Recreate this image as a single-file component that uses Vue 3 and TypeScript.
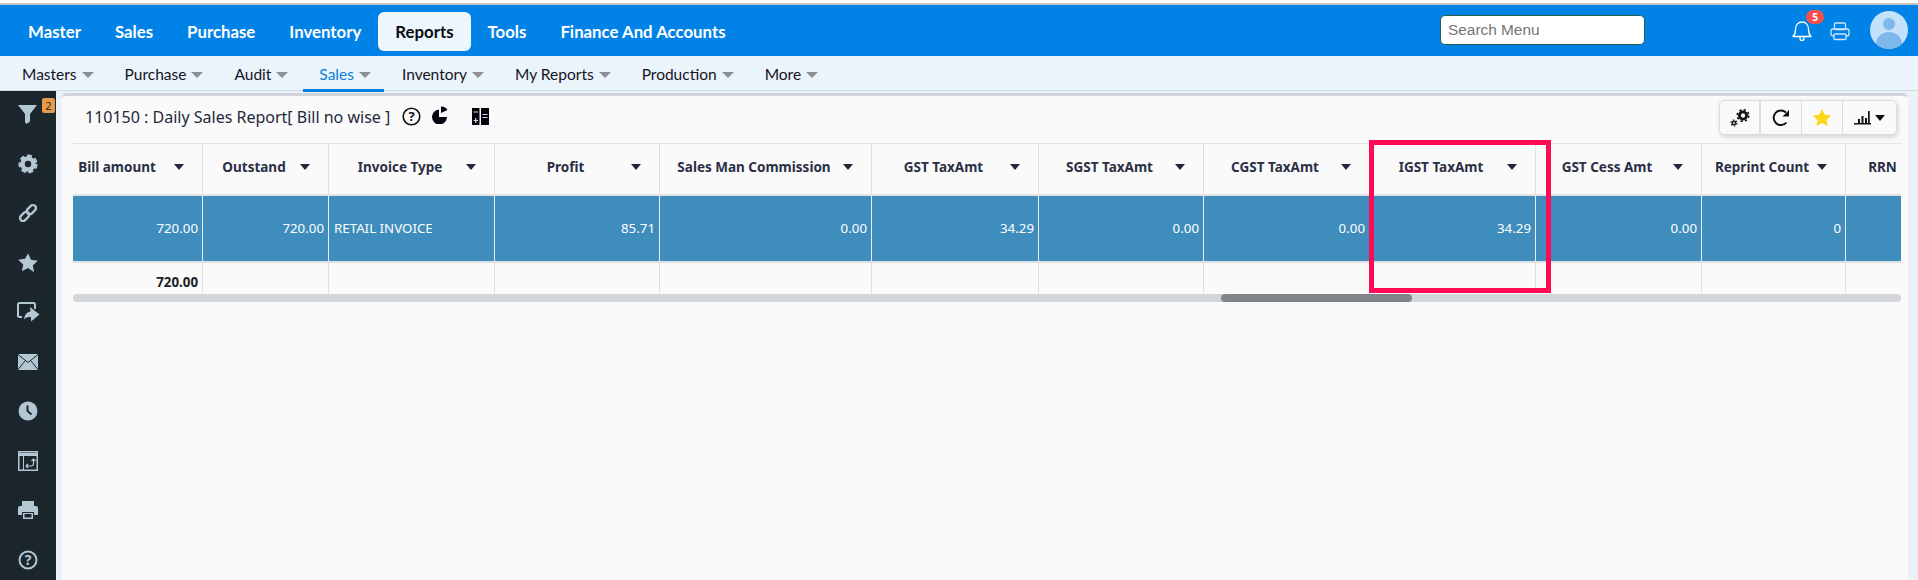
<script setup lang="ts">
interface HeaderCell { label: string }
const topMenu: string[] = ['Master', 'Sales', 'Purchase', 'Inventory', 'Reports', 'Tools', 'Finance And Accounts']
const subMenu: string[] = ['Masters', 'Purchase', 'Audit', 'Sales', 'Inventory', 'My Reports', 'Production', 'More']
const headers: HeaderCell[] = [
  'Bill amount', 'Outstand', 'Invoice Type', 'Profit', 'Sales Man Commission', 'GST TaxAmt',
  'SGST TaxAmt', 'CGST TaxAmt', 'IGST TaxAmt', 'GST Cess Amt', 'Reprint Count', 'RRN'
].map((label) => ({ label }))
const values: string[] = ['720.00', '720.00', 'RETAIL INVOICE', '85.71', '0.00', '34.29', '0.00', '0.00', '34.29', '0.00', '0', '']
const totals: string[] = ['720.00', '', '', '', '', '', '', '', '', '', '', '']
</script>

<template>
  <div class="page">
    <div class="topline"></div>
    <header class="topbar">
      <nav class="topmenu">
        <a v-for="m in topMenu" :key="m" class="topitem" :class="{ on: m === 'Reports' }">{{ m }}</a>
      </nav>
      <input class="search" placeholder="Search Menu" />
      <div class="bell">
        <svg width="20" height="21" viewBox="0 0 20 21" fill="none" stroke="#fff" stroke-width="1.3">
          <path d="M1 16.5c2-1.800 2.500-3.500 2.500-7C3.500 5 6 2 10 2s6.500 3 6.500 7.500c0 3.500.5 5.200 2.500 7z" stroke-linejoin="round" />
          <path d="M8 17v1.500a2 2 0 0 0 4 0V17" />
        </svg>
        <span class="badge">5</span>
      </div>
      <svg class="print" width="20" height="19" viewBox="0 0 20 19" fill="none" stroke="#cfe5fb" stroke-width="1.3">
        <rect x="4.500" y="1" width="11" height="6.500" rx="1" />
        <rect x="1" y="7" width="18" height="7" rx="2" />
        <rect x="4" y="12" width="12" height="5.500" rx="1" fill="#0082e6" />
      </svg>
      <svg class="avatar" width="38" height="38" viewBox="0 0 38 38">
        <defs><clipPath id="ava"><circle cx="19" cy="19" r="19" /></clipPath></defs>
        <circle cx="19" cy="19" r="19" fill="#c4e1fb" />
        <g clip-path="url(#ava)" fill="#7db7ec">
          <circle cx="19" cy="13" r="6" />
          <ellipse cx="19" cy="33" rx="13" ry="12" />
        </g>
      </svg>
    </header>

    <nav class="submenu">
      <a v-for="s in subMenu" :key="s" class="subitem" :class="{ on: s === 'Sales' }">
        {{ s }}<i class="subcaret"></i>
      </a>
    </nav>

    <div class="main">
      <aside class="side">
        <div class="sideitem">
          <svg width="20" height="20" viewBox="0 0 20 20"><path fill="#b4c8d4" d="M0 1h19l-7 9v7.500L8.500 20 7 18V10z" /></svg>
          <span class="sidebadge">2</span>
        </div>
        <div class="sideitem">
          <svg width="20" height="20" viewBox="0 0 20 20" fill="none">
            <circle cx="10" cy="10" r="5.500" stroke="#b4c8d4" stroke-width="4.500" />
            <circle cx="10" cy="10" r="8.300" stroke="#b4c8d4" stroke-width="2.500" stroke-dasharray="4.700 2.900" />
          </svg>
        </div>
        <div class="sideitem">
          <svg width="20" height="20" viewBox="0 0 20 20" fill="none" stroke="#b4c8d4" stroke-width="2.300">
            <rect x="-5.500" y="-3" width="10.500" height="6" rx="3" transform="translate(6.800 13.200) rotate(-45)" />
            <rect x="-5" y="-3" width="10.500" height="6" rx="3" transform="translate(13.200 6.800) rotate(-45)" />
          </svg>
        </div>
        <div class="sideitem">
          <svg width="20" height="20" viewBox="0 0 20 20"><path fill="#b4c8d4" d="M10 .5l3 6.300 6.800.9-5 4.700 1.300 6.800L10 15l-6.100 3.200 1.300-6.800-5-4.700 6.800-.9z" /></svg>
        </div>
        <div class="sideitem">
          <svg width="23" height="20" viewBox="0 0 23 20" fill="none">
            <path d="M5 15H2.500A1.500 1.500 0 0 1 1 13.500v-11A1.500 1.500 0 0 1 2.500 1h14A1.500 1.500 0 0 1 18 2.500V7" stroke="#b4c8d4" stroke-width="2" />
            <path fill="#b4c8d4" d="M13 5l9.500 7.500L14 19.500V15c-3.500 0-5.500.5-7 2.500C7.500 13 10 10 13.500 9.500z" />
          </svg>
        </div>
        <div class="sideitem">
          <svg width="20" height="16" viewBox="0 0 20 16" fill="none">
            <rect width="20" height="16" rx="1" fill="#b4c8d4" />
            <path d="M0 .5l10 8 10-8M0 15.500l7-8.500M20 15.500l-7-8.500" stroke="#1c262d" stroke-width="1" />
          </svg>
        </div>
        <div class="sideitem">
          <svg width="20" height="20" viewBox="0 0 20 20" fill="none">
            <circle cx="10" cy="10" r="9.500" fill="#b4c8d4" />
            <path d="M9.500 4.500v5.500l4 3.500" stroke="#1c262d" stroke-width="2" />
          </svg>
        </div>
        <div class="sideitem">
          <svg width="20" height="20" viewBox="0 0 20 20" fill="none">
            <rect x=".75" y=".75" width="18.500" height="18.500" stroke="#b4c8d4" stroke-width="1.500" />
            <path d="M1 2h18v3H1z" fill="#b4c8d4" />
            <path d="M5.500 5v14" stroke="#b4c8d4" stroke-width="1" />
            <path d="M8 15h6l1.500-1.500V9M13.500 10l2-2 2 2M10 17l-2-2 2-2" stroke="#b4c8d4" stroke-width="1.200" />
          </svg>
        </div>
        <div class="sideitem">
          <svg width="20" height="18" viewBox="0 0 20 18">
            <path fill="#b4c8d4" d="M4 0h12v5H4zM2 5h16a2 2 0 0 1 2 2v7h-4v-3H4v3H0V7a2 2 0 0 1 2-2zM5 12h10v6H5z" />
            <path fill="#1c262d" d="M6.500 13h7v3.500h-7z" />
          </svg>
        </div>
        <div class="sideitem">
          <svg width="20" height="20" viewBox="0 0 20 20">
            <circle cx="10" cy="10" r="8.500" fill="none" stroke="#b4c8d4" stroke-width="2" />
            <text x="10" y="15" text-anchor="middle" class="qmark" fill="#b4c8d4">?</text>
          </svg>
        </div>
      </aside>

      <section class="panel">
        <div class="panelhead">
          <div class="title">
            <span class="titletext">110150 : Daily Sales Report[ Bill no wise ]</span>
            <svg class="thelp" width="19" height="19" viewBox="0 0 19 19">
              <circle cx="9.500" cy="9.500" r="8.300" fill="none" stroke="#111" stroke-width="1.600" />
              <text x="9.500" y="14" text-anchor="middle" class="qmark dark" fill="#111">?</text>
            </svg>
            <svg class="tpie" width="16" height="18" viewBox="0 0 16 18">
              <path fill="#050510" d="M7 3.500A7.500 7.500 0 1 0 15 11H7z" />
              <path fill="#050510" d="M9 .5A7 7 0 0 1 15.500 4L9 7z" />
            </svg>
            <svg class="tcalc" width="17" height="17" viewBox="0 0 17 17">
              <rect width="7.500" height="17" fill="#050510" />
              <rect x="9" width="8" height="17" fill="#050510" />
              <path d="M1.500 4h4.500M1.500 12.500h4.500M3.700 10v5M10.500 6.500h5M10.500 9.500h5" stroke="#d7dbe0" stroke-width="1.200" />
            </svg>
          </div>
          <div class="tools">
            <div class="tool wide">
              <svg width="20" height="18" viewBox="0 0 20 18" fill="none" stroke="#111">
                <circle cx="13" cy="6.500" r="3.600" stroke-width="2.800" />
                <circle cx="13" cy="6.500" r="5.800" stroke-width="1.500" stroke-dasharray="2.300 2.250" />
                <circle cx="4" cy="14" r="1.700" stroke-width="1.400" />
                <circle cx="4" cy="14" r="3" stroke-width="1.200" stroke-dasharray="1.500 1.640" />
              </svg>
            </div>
            <div class="tool">
              <svg width="18" height="18" viewBox="0 0 18 18" fill="none">
                <path d="M14.500 13.500A7.300 7.300 0 1 1 14 3.500" stroke="#111" stroke-width="1.900" />
                <path d="M17 1v6.500h-6.500z" fill="#111" />
              </svg>
            </div>
            <div class="tool">
              <svg width="18" height="17" viewBox="0 0 18 17"><path fill="#ffd414" d="M9 0l2.700 5.800 6.300.8-4.600 4.300 1.200 6.100L9 14l-5.600 3 1.200-6.100L0 6.600l6.300-.8z" /></svg>
            </div>
            <div class="tool last">
              <svg width="17" height="15" viewBox="0 0 17 15" fill="#111">
                <path d="M0 13h17v1.600H0zM4 9h2v4H4zM7.500 6h2v7h-2zM11 8h2v5h-2zM14 1h1.700v12H14z" />
              </svg>
              <i class="toolcaret"></i>
            </div>
          </div>
        </div>

        <div class="tablewrap">
          <div class="clip">
            <div class="grid head">
              <div v-for="h in headers" :key="h.label" class="hcell">
                <span class="hlabel">{{ h.label }}</span><i class="hcaret"></i>
              </div>
            </div>
            <div class="grid datarow">
              <div v-for="(v, i) in values" :key="i" class="dcell" :class="{ left: v === 'RETAIL INVOICE' }">{{ v }}</div>
            </div>
            <div class="grid foot">
              <div v-for="(v, i) in totals" :key="i" class="fcell">{{ v }}</div>
            </div>
            <div class="scrollbar"><div class="thumb"></div></div>
          </div>
          <div class="mark"></div>
        </div>
      </section>
    </div>
  </div>
</template>

<style>
html, body { margin: 0; padding: 0; background: #fff; }
</style>

<style scoped>
.page { width: 1918px; height: 580px; overflow: hidden; display: flex; flex-direction: column; background: #ecf1f7; }
.topline { height: 3px; background: #fff; border-bottom: 2px solid #c4c4c4; flex: none; }
.topbar { height: 51px; flex: none; background: #0082e6; display: flex; align-items: center; position: relative; }
.topmenu { display: flex; align-items: center; padding-left: 11px; flex: 1; }
.topitem { font: 700 16.800px Lato, sans-serif; color: #fff; padding: 0 17px; height: 39px; line-height: 40px; border-radius: 6px; margin-top: 1px; white-space: nowrap; }
.topitem.on { background: #edf5fd; color: #0b0b14; }
.search { width: 205px; height: 30px; box-sizing: border-box; border: 1px solid #2a5a4c; border-radius: 5px; padding: 0 7px; font: 15.400px "Liberation Sans", sans-serif; margin: -1px 147px 0 0; background: #fff; outline: none; }
.search::placeholder { color: #757575; opacity: 1; }
.bell { position: relative; width: 20px; height: 21px; margin-right: 18px; margin-top: -1px; }
.bell svg { display: block; }
.badge { position: absolute; left: 14px; top: -10px; width: 18px; height: 14px; border-radius: 7px; background: #f5524f; color: #fff; font: 700 10px/14px "Noto Sans", sans-serif; text-align: center; }
.print { margin-right: 20px; margin-top: 2px; }
.avatar { margin-right: 10px; margin-top: -1px; }

.submenu { height: 34px; flex: none; box-sizing: content-box; background: #ebf3fb; border-bottom: 1px solid #cddbe8; display: flex; gap: 2px; padding-left: 6px; }
.subitem { height: 36px; box-sizing: border-box; padding: 0 13px 0 16px; font: 15.500px/36px Lato, sans-serif; color: #14141e; display: flex; align-items: flex-start; white-space: nowrap; }
.subitem.on { color: #0a7fdf; border-bottom: 3px solid #0a7fdf; }
.subcaret { width: 0; height: 0; border-left: 6px solid transparent; border-right: 6px solid transparent; border-top: 6px solid #8b9096; margin: 16px 0 0 5px; }

.main { flex: 1; display: flex; min-height: 0; }
.side { width: 56px; flex: none; background: #1c262d; display: flex; flex-direction: column; }
.sideitem { height: 49.500px; flex: none; display: flex; align-items: center; justify-content: center; position: relative; padding-bottom: 3px; box-sizing: border-box; }
.sideitem svg { display: block; }
.sidebadge { position: absolute; left: 42px; top: 7px; width: 13px; height: 15px; border-radius: 2px; background: #e69a4a; color: #2a2a2a; font: 11px/15px "Noto Sans", sans-serif; text-align: center; }
.qmark { font: 700 14px "Noto Sans", sans-serif; }
.qmark.dark { font-size: 13px; }

.panel { flex: 1; margin: 2px 10px 0 6px; background: #fafafa; border-top: 3px solid #d0d4da; border-radius: 5px 5px 0 0; min-width: 0; }
.panelhead { height: 47px; box-sizing: border-box; display: flex; justify-content: space-between; padding: 4px 11px 0 23px; }
.title { display: flex; align-items: center; height: 33px; }
.titletext { font: 16px "Noto Sans", sans-serif; color: #24283a; white-space: nowrap; }
.thelp { margin-left: 12px; }
.tpie { margin-left: 11px; margin-top: -3px; }
.tcalc { margin-left: 24px; margin-top: -1px; }
.tools { display: flex; width: 178px; height: 35px; box-sizing: border-box; border: 1px solid #dcdcdc; border-radius: 5px; background: #fafafa; box-shadow: 1px 2px 5px rgba(0, 0, 0, .16); }
.tool { width: 41px; flex: none; box-sizing: border-box; border-right: 1px solid #dcdcdc; display: flex; align-items: center; justify-content: center; }
.tool.wide { border-right-width: 2px; }
.tool.last { flex: 1; border-right: 0; gap: 4px; }
.toolcaret { width: 0; height: 0; border-left: 5px solid transparent; border-right: 5px solid transparent; border-top: 6px solid #111; }

.tablewrap { position: relative; margin: 0 7px 0 11px; }
.clip { overflow: hidden; border-top: 1px solid #e3e3e3; }
.grid { display: grid; grid-template-columns: 148px 126px 166px 165px 212px 167px 165px 166px 166px 166px 144px 96px; width: 1887px; margin-left: -18px; }
.head { height: 50px; border-bottom: 2px solid #e0e2e5; }
.hcell { display: flex; align-items: center; box-sizing: border-box; padding: 0 18px 4px 5px; border-right: 1px solid #e0e0e0; }
.hcell:last-child { border-right: 0; }
.hlabel { flex: 1; text-align: center; font: 700 13.500px "Noto Sans", sans-serif; color: #2a2f45; white-space: nowrap; }
.hcaret { flex: none; width: 0; height: 0; border-left: 5.500px solid transparent; border-right: 5.500px solid transparent; border-top: 6px solid #23283a; }
.datarow { height: 65px; background: #3e8dbd; border-bottom: 2px solid #e0e2e5; }
.dcell { box-sizing: border-box; padding: 0 4px 0 5px; border-right: 1px solid #e6eff5; text-align: right; color: #fff; font: 13.300px/65px "Noto Sans", sans-serif; white-space: nowrap; }
.dcell.left { text-align: left; }
.dcell:last-child { border-right: 0; }
.foot { height: 31px; }
.fcell { height: 31px; box-sizing: border-box; padding: 0 4px 0 5px; border-right: 1px solid #e0e0e0; text-align: right; color: #1b1e28; font: 700 13.300px/38px "Noto Sans", sans-serif; }
.fcell:last-child { border-right: 0; }
.scrollbar { height: 8px; background: #d2d5da; border-radius: 4px; position: relative; }
.thumb { position: absolute; left: 1148px; width: 191px; top: 0; bottom: 0; background: #82858b; border-radius: 4px; }
.mark { position: absolute; left: 1296px; top: -3px; width: 182px; height: 153px; box-sizing: border-box; border: 5px solid #ff0a54; pointer-events: none; }
</style>
